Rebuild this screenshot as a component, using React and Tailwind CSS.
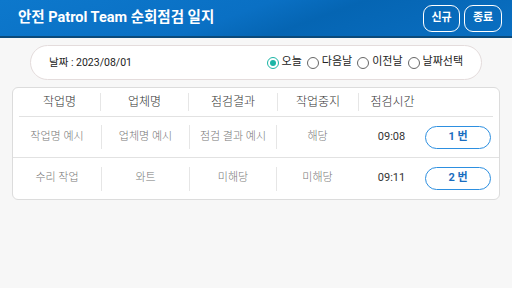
import { useState } from "react";

const rows = [
  { name: "작업명 예시", company: "업체명 예시", result: "점검 결과 예시", stop: "해당", time: "09:08", no: "1 번" },
  { name: "수리 작업", company: "와트", result: "미해당", stop: "미해당", time: "09:11", no: "2 번" },
];

const options = ["오늘", "다음날", "이전날", "날짜선택"];

function Radio({ checked }) {
  return (
    <span
      className={`flex h-[12px] w-[12px] items-center justify-center rounded-full border ${
        checked ? "border-[#1bb5a6]" : "border-[#666]"
      }`}
    >
      {checked && <span className="h-[6px] w-[6px] rounded-full bg-[#1bb5a6]" />}
    </span>
  );
}

export default function App() {
  const [day, setDay] = useState("오늘");

  return (
    <div
      className="h-[288px] w-[512px] bg-[#f7f7f7]"
      style={{ fontFamily: "Roboto, 'Noto Sans CJK KR', sans-serif" }}
    >
      {/* Top bar */}
      <div className="flex h-[38px] items-center justify-between border-b-2 border-[#0b4a7a] bg-[linear-gradient(160deg,#0d78cc_0%,#0a70c4_45%,#0565b3_60%,#0a6fc2_100%)] pl-[18px] pr-[10px]">
        <h1 className="text-[14.5px] font-bold text-white">안전 Patrol Team 순회점검 일지</h1>
        <div className="flex gap-[4px]">
          <button className="h-[27px] w-[37px] rounded-[9px] border border-white text-[11px] font-bold text-white">
            신규
          </button>
          <button className="h-[27px] w-[38px] rounded-[9px] border border-white text-[11px] font-bold text-white">
            종료
          </button>
        </div>
      </div>

      {/* Date bar */}
      <div className="mx-[30px] mt-[7px] flex h-[35px] items-center justify-between rounded-full border border-[#e4dcdc] bg-white pl-[18px] pr-[18px]">
        <span className="text-[10.5px] text-[#222]">날짜 : 2023/08/01</span>
        <div className="flex items-center gap-[5px] text-[11px] text-[#222]">
          {options.map((o) => (
            <label key={o} className="flex items-center gap-[3px]" onClick={() => setDay(o)}>
              <Radio checked={day === o} />
              <span>{o}</span>
            </label>
          ))}
        </div>
      </div>

      {/* Table */}
      <div className="mx-[12px] mt-[7px] w-[488px] rounded-[6px] border border-[#dcdcdc] bg-white">
        <div className="mx-[6px] flex h-[29px] items-center border-b border-[#e2e2e2] text-[12px] font-light text-[#333]">
          <div className="w-[82px] border-r border-[#e6e6e6] text-center">작업명</div>
          <div className="w-[88px] border-r border-[#e6e6e6] text-center">업체명</div>
          <div className="w-[89px] border-r border-[#e6e6e6] text-center">점검결과</div>
          <div className="w-[81px] border-r border-[#e6e6e6] text-center">작업중지</div>
          <div className="w-[67px] text-center">점검시간</div>
        </div>
        {rows.map((r, i) => (
          <div
            key={r.no}
            className={`flex h-[41px] items-center text-[11px] font-light text-[#777] ${
              i === 0 ? "border-b border-[#e2e2e2]" : ""
            }`}
          >
            <div className="flex h-[24px] w-[89px] items-center justify-center border-r border-[#e6e6e6]">{r.name}</div>
            <div className="flex h-[24px] w-[88px] items-center justify-center border-r border-[#e6e6e6]">{r.company}</div>
            <div className="flex h-[24px] w-[87px] items-center justify-center border-r border-[#e6e6e6]">{r.result}</div>
            <div className="flex h-[24px] w-[81px] items-center justify-center">{r.stop}</div>
            <div className="w-[67px] text-center font-normal text-[#333]">{r.time}</div>
            <button className="h-[23px] w-[66px] rounded-full border border-[#2d8fe0] text-[11px] font-bold text-[#1a6dc0]">
              {r.no}
            </button>
          </div>
        ))}
      </div>
    </div>
  );
}
